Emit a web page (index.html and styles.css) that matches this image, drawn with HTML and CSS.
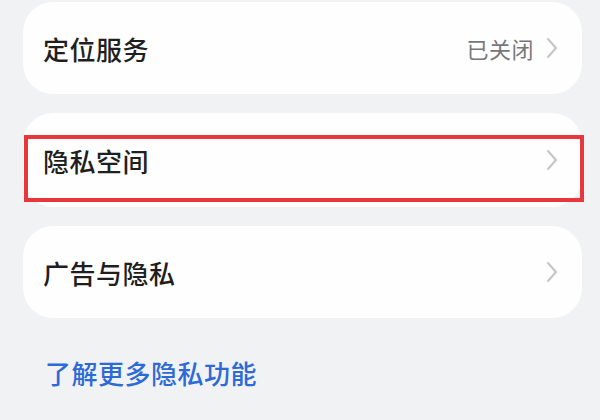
FILE: index.html
```html
<!DOCTYPE html>
<html lang="zh">
<head>
<meta charset="utf-8">
<link rel="stylesheet" href="styles.css">
</head>
<body>
<div class="page">
  <div class="card">
    <div class="row">
      <span class="label">定位服务</span>
      <span class="right"><span class="value">已关闭</span>
        <svg class="chev" viewBox="0 0 12 22" width="12" height="22"><path d="M2 2 L10 11 L2 20" fill="none" stroke="#c4c4c4" stroke-width="2" stroke-linecap="round" stroke-linejoin="round"/></svg>
      </span>
    </div>
  </div>
  <div class="card card-mid">
    <div class="row">
      <span class="label">隐私空间</span>
      <span class="right">
        <svg class="chev" viewBox="0 0 12 22" width="12" height="22"><path d="M2 2 L10 11 L2 20" fill="none" stroke="#c4c4c4" stroke-width="2" stroke-linecap="round" stroke-linejoin="round"/></svg>
      </span>
    </div>
    <div class="highlight"></div>
  </div>
  <div class="card">
    <div class="row">
      <span class="label">广告与隐私</span>
      <span class="right">
        <svg class="chev" viewBox="0 0 12 22" width="12" height="22"><path d="M2 2 L10 11 L2 20" fill="none" stroke="#c4c4c4" stroke-width="2" stroke-linecap="round" stroke-linejoin="round"/></svg>
      </span>
    </div>
  </div>
  <div class="link">了解更多隐私功能</div>
</div>
</body>
</html>
```

FILE: styles.css
```css
html, body {
  margin: 0;
  padding: 0;
  background: #f1f2f4;
  font-family: "Noto Sans CJK SC", "Noto Sans", sans-serif;
}
.page {
  width: 600px;
  height: 420px;
  box-sizing: border-box;
  padding: 2px 18px 0 23px;
  display: flex;
  flex-direction: column;
  gap: 19px;
  overflow: hidden;
}
.card {
  background: #fefefe;
  border-radius: 30px;
  height: 92px;
  display: flex;
  align-items: center;
  position: relative;
}
.card-mid {
  height: 94px;
}
.row {
  flex: 1;
  display: flex;
  align-items: center;
  justify-content: space-between;
  padding: 0 24px 0 20px;
}
.label {
  font-size: 26px;
  font-weight: 500;
  color: #1f1f1f;
  letter-spacing: 0.5px;
}
.right {
  display: flex;
  align-items: center;
  gap: 12px;
}
.value {
  font-size: 22px;
  color: #777777;
  letter-spacing: 0.5px;
}
.chev {
  display: block;
}
.highlight {
  position: absolute;
  left: 1px;
  right: -2px;
  top: 22px;
  height: 67px;
  border: 4px solid #e8363b;
  box-sizing: border-box;
}
.link {
  margin-top: 17px;
  padding-left: 22px;
  font-size: 26px;
  font-weight: 500;
  color: #2d6ad6;
  letter-spacing: 0.5px;
}
```
